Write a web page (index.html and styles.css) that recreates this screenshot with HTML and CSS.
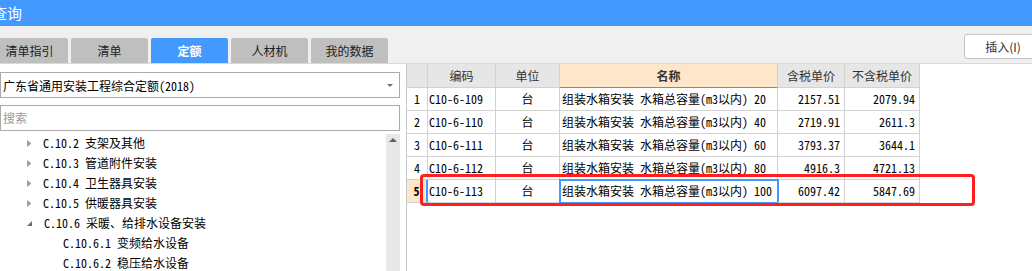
FILE: index.html
```html
<!DOCTYPE html>
<html lang="zh-CN">
<head>
    <meta charset="UTF-8">
    <title>查询</title>
    <link rel="stylesheet" href="styles.css">
</head>
<body>
    <div class="window">
        <div class="titlebar"><span class="title">查询</span></div>

        <div class="toolbar">
            <div class="tabs">
                <div class="tab">清单指引</div>
                <div class="tab">清单</div>
                <div class="tab active">定额</div>
                <div class="tab">人材机</div>
                <div class="tab">我的数据</div>
            </div>
            <button class="insert-btn">插入(I)</button>
        </div>

        <div class="main">
            <div class="left-panel">
                <div class="select">
                    <span>广东省通用安装工程综合定额(2018)</span>
                    <span class="select-arrow"></span>
                </div>
                <div class="search">搜索</div>
                <div class="tree-wrap">
                    <div class="tree">
                        <div class="tree-row"><span class="arrow closed"></span>C.10.2 支架及其他</div>
                        <div class="tree-row"><span class="arrow closed"></span>C.10.3 管道附件安装</div>
                        <div class="tree-row"><span class="arrow closed"></span>C.10.4 卫生器具安装</div>
                        <div class="tree-row"><span class="arrow closed"></span>C.10.5 供暖器具安装</div>
                        <div class="tree-row"><span class="arrow open"></span>C.10.6 采暖、给排水设备安装</div>
                        <div class="tree-row child">C.10.6.1 变频给水设备</div>
                        <div class="tree-row child">C.10.6.2 稳压给水设备</div>
                    </div>
                    <div class="scrollbar"><span class="scroll-up"></span></div>
                </div>
            </div>

            <div class="right-panel">
                <div class="grid">
                    <div class="cell head"></div>
                    <div class="cell head">编码</div>
                    <div class="cell head">单位</div>
                    <div class="cell head name-head">名称</div>
                    <div class="cell head">含税单价</div>
                    <div class="cell head">不含税单价</div>

                    <div class="cell num">1</div>
                    <div class="cell code">C10-6-109</div>
                    <div class="cell unit">台</div>
                    <div class="cell name">组装水箱安装 水箱总容量(m3以内) 20</div>
                    <div class="cell price">2157.51</div>
                    <div class="cell price">2079.94</div>

                    <div class="cell num">2</div>
                    <div class="cell code">C10-6-110</div>
                    <div class="cell unit">台</div>
                    <div class="cell name">组装水箱安装 水箱总容量(m3以内) 40</div>
                    <div class="cell price">2719.91</div>
                    <div class="cell price">2611.3</div>

                    <div class="cell num">3</div>
                    <div class="cell code">C10-6-111</div>
                    <div class="cell unit">台</div>
                    <div class="cell name">组装水箱安装 水箱总容量(m3以内) 60</div>
                    <div class="cell price">3793.37</div>
                    <div class="cell price">3644.1</div>

                    <div class="cell num">4</div>
                    <div class="cell code">C10-6-112</div>
                    <div class="cell unit">台</div>
                    <div class="cell name">组装水箱安装 水箱总容量(m3以内) 80</div>
                    <div class="cell price">4916.3</div>
                    <div class="cell price">4721.13</div>

                    <div class="cell num current">5</div>
                    <div class="cell code">C10-6-113</div>
                    <div class="cell unit">台</div>
                    <div class="cell name selected">组装水箱安装 水箱总容量(m3以内) 100</div>
                    <div class="cell price">6097.42</div>
                    <div class="cell price">5847.69</div>
                </div>
                <div class="highlight"></div>
            </div>
        </div>
    </div>
</body>
</html>
```

FILE: styles.css
```css
* {
    margin: 0;
    padding: 0;
    box-sizing: border-box;
}

body {
    width: 1032px;
    height: 271px;
    overflow: hidden;
    background: #ffffff;
    font-family: "Noto Sans CJK SC", sans-serif;
    font-size: 12px;
    color: #000;
}

.window {
    width: 1032px;
    height: 271px;
    overflow: hidden;
    display: flex;
    flex-direction: column;
}

.titlebar {
    height: 26px;
    flex-shrink: 0;
    background: #4499ff;
    display: flex;
    align-items: center;
}

.title {
    margin-left: -8px;
    color: #fff;
    font-size: 15px;
    line-height: 26px;
}

/* tabs + insert button */
.toolbar {
    height: 38px;
    flex-shrink: 0;
    background: #f0f0f0;
    border-bottom: 1px solid #d9d9d9;
    display: flex;
    align-items: flex-start;
}

.tabs {
    display: flex;
    gap: 3px;
    margin-left: -9px;
    margin-top: 12px;
}

.tab {
    width: 77px;
    height: 25px;
    background: #bfbfbf;
    border-radius: 2px 2px 0 0;
    color: #222;
    text-align: center;
    line-height: 25px;
}

.tab.active {
    background: #4499ff;
    color: #fff;
    font-weight: bold;
}

.insert-btn {
    margin-left: auto;
    margin-right: -10px;
    margin-top: 8px;
    width: 78px;
    height: 25px;
    background: #fff;
    border: 1px solid #c4c4c4;
    border-radius: 3px;
    font-family: "Noto Sans CJK SC", sans-serif;
    font-size: 12px;
    color: #333;
}

.main {
    flex: 1;
    display: flex;
    min-height: 0;
}

/* left side: library picker, search, chapter tree */
.left-panel {
    width: 406px;
    flex-shrink: 0;
    padding: 8px 6px 0 0;
    display: flex;
    flex-direction: column;
    font-family: "Noto Sans Mono CJK SC", "Noto Sans CJK SC", sans-serif;
}

.select {
    height: 26px;
    border: 1px solid #ababab;
    display: flex;
    align-items: center;
    justify-content: space-between;
    padding: 0 6px 0 2px;
}

.select-arrow {
    width: 0;
    height: 0;
    border-left: 3px solid transparent;
    border-right: 3px solid transparent;
    border-top: 3px solid #707070;
}

.search {
    height: 26px;
    margin-top: 7px;
    border: 1px solid #ababab;
    padding-left: 2px;
    line-height: 24px;
    color: #9a9a9a;
}

.tree-wrap {
    flex: 1;
    margin-top: 2px;
    display: flex;
    min-height: 0;
}

.tree {
    flex: 1;
}

.tree-row {
    height: 20px;
    line-height: 20px;
    padding-left: 27px;
    display: flex;
    align-items: center;
    white-space: pre;
}

.tree-row.child {
    padding-left: 63px;
}

.arrow {
    width: 4px;
    height: 7px;
    margin-right: 12px;
}

.arrow.closed {
    border-top: 3.5px solid transparent;
    border-bottom: 3.5px solid transparent;
    border-left: 4px solid #a0a0a0;
}

.arrow.open {
    width: 5px;
    height: 5px;
    margin-left: 0;
    margin-right: 12px;
    border-left: 5px solid transparent;
    border-bottom: 5px solid #6e6e6e;
}

.scrollbar {
    width: 14px;
    margin-top: 1px;
    background: #e8e8e8;
    display: flex;
    justify-content: center;
    padding-top: 4px;
}

.scroll-up {
    width: 0;
    height: 0;
    border-left: 4px solid transparent;
    border-right: 4px solid transparent;
    border-bottom: 4px solid #606060;
}

/* right side: quota grid */
.right-panel {
    flex: 1;
    position: relative;
    border-left: 1px solid #c8c8c8;
    font-family: "Noto Sans Mono CJK SC", "Noto Sans CJK SC", sans-serif;
}

.grid {
    display: grid;
    grid-template-columns: 21px 68px 64px 218px 67px 75px;
    grid-template-rows: 24px repeat(5, 23px);
}

.cell {
    border-right: 1px solid #d2d2d2;
    border-bottom: 1px solid #d2d2d2;
    line-height: 22px;
    white-space: nowrap;
    overflow: hidden;
}

.cell.head {
    background: #e6e6e6;
    color: #333;
    text-align: center;
    line-height: 23px;
    font-family: "Noto Sans CJK SC", sans-serif;
}

.cell.name-head {
    background: #fde6c9;
    border-bottom-color: #4499ff;
    font-weight: bold;
}

.cell.num {
    text-align: center;
}

.cell.num.current {
    background: #fde6c9;
    font-weight: bold;
    border-right: 2px solid #4499ff;
}

.cell.code {
    padding-left: 1px;
}

.cell.unit {
    text-align: center;
}

.cell.name {
    padding-left: 2px;
}

.cell.name.selected {
    outline: 2px solid #4499ff;
    outline-offset: -1px;
}

.cell.price {
    text-align: right;
    padding-right: 4px;
}

.highlight {
    position: absolute;
    left: 13px;
    top: 110px;
    width: 555px;
    height: 32px;
    border: 3px solid #ff1f1f;
    border-radius: 4px;
}
```
